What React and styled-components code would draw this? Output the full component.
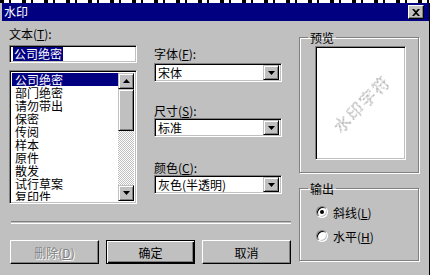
import React from 'react';
import styled, { createGlobalStyle } from 'styled-components';

const GlobalStyle = createGlobalStyle`
  html, body { margin: 0; padding: 0; }
  body {
    width: 430px;
    height: 275px;
    overflow: hidden;
    background: #c0c0c0;
    font-family: "Noto Sans CJK SC", "Liberation Sans", sans-serif;
    font-size: 12px;
    color: #000;
  }
`;

const face = '#c0c0c0';
const shadow = '#808080';
const navy = '#000080';

const TopStrip = styled.div`
  height: 3px;
  background: repeating-linear-gradient(90deg, #000 0 4px, #fff 4px 9px, #000 9px 11px, #fff 11px 22px);
`;

const Window = styled.div`
  position: relative;
  height: 272px;
  padding-left: 2px;
  background: ${face};
  box-sizing: border-box;
  border-right: 1px solid #000;
`;

const TitleBar = styled.div`
  height: 18px;
  background: ${navy};
  display: flex;
  align-items: center;
  justify-content: space-between;
  padding: 0 5px 0 2px;
  color: #fff;
  font-size: 12px;
  line-height: 18px;
`;

const CloseButton = styled.div`
  width: 16px;
  height: 14px;
  box-sizing: border-box;
  background: ${face};
  border: 1px solid;
  border-color: #fff #000 #000 #fff;
  box-shadow: inset -1px -1px 0 ${shadow};
  display: flex;
  align-items: center;
  justify-content: center;
`;

const Body = styled.div`
  display: flex;
  padding: 6px 0 0 7px;
`;

const LeftArea = styled.div`
  width: 282px;
  display: flex;
  flex-direction: column;
`;

const TopRow = styled.div`
  display: flex;
  gap: 17px;
`;

const Column = styled.div`
  width: 128px;
  display: flex;
  flex-direction: column;
  padding-top: ${p => p.$top || 0}px;
`;

const Label = styled.div`
  height: 13px;
  line-height: 13px;
  white-space: nowrap;
  margin-top: ${p => p.$mt || 0}px;
  margin-bottom: ${p => p.$mb || 0}px;
  u { text-decoration: underline; }
`;

const Sunken = styled.div`
  box-sizing: border-box;
  background: #fff;
  border: 1px solid;
  border-color: ${shadow} #fff #fff ${shadow};
  box-shadow: inset 1px 1px 0 #000, inset -1px -1px 0 ${face};
`;

const TextField = styled(Sunken)`
  height: 18px;
  padding: 1px 3px;
  display: flex;
  align-items: center;
`;

const Selected = styled.span`
  background: ${navy};
  color: #fff;
  line-height: 14px;
  padding: 0 1px;
`;

const ListBox = styled(Sunken)`
  margin-top: 7px;
  height: 134px;
  padding: 2px;
  display: flex;
`;

const ListItems = styled.div`
  flex: 1;
  overflow: hidden;
`;

const ListItem = styled.div`
  height: 13px;
  line-height: 13px;
  padding-left: 3px;
  white-space: nowrap;
  background: ${p => (p.$active ? navy : 'transparent')};
  color: ${p => (p.$active ? '#fff' : '#000')};
`;

const ScrollBar = styled.div`
  width: 16px;
  display: flex;
  flex-direction: column;
`;

const ArrowButton = styled.div`
  width: 16px;
  height: ${p => p.$h || 16}px;
  box-sizing: border-box;
  background: ${face};
  border: 1px solid;
  border-color: ${face} #000 #000 ${face};
  box-shadow: inset 1px 1px 0 #fff, inset -1px -1px 0 ${shadow};
  display: flex;
  align-items: center;
  justify-content: center;
  flex: none;
`;

const Track = styled.div`
  flex: 1;
  background: repeating-conic-gradient(${face} 0 25%, #fff 0 50%) 0 0 / 2px 2px;
`;

const Combo = styled(Sunken)`
  height: 19px;
  padding: 2px 2px 2px 3px;
  display: flex;
  align-items: center;
  justify-content: space-between;
`;

const ComboText = styled.span`
  white-space: nowrap;
`;

const Separator = styled.div`
  margin-top: 17px;
  margin-left: 2px;
  height: 1px;
  border-top: 1px solid ${shadow};
  border-bottom: 1px solid #fff;
`;

const ButtonRow = styled.div`
  display: flex;
  gap: 7px;
  margin-top: 16px;
  padding-left: 1px;
`;

const Button = styled.div`
  width: 89px;
  height: 24px;
  box-sizing: border-box;
  background: ${face};
  border: 1px solid;
  border-color: ${p => (p.$default ? '#000' : '#fff #000 #000 #fff')};
  box-shadow: ${p =>
    p.$default
      ? `inset 1px 1px 0 #fff, inset -1px -1px 0 #000, inset -2px -2px 0 ${shadow}`
      : `inset -1px -1px 0 ${shadow}`};
  display: flex;
  align-items: center;
  justify-content: center;
  color: ${p => (p.$disabled ? shadow : '#000')};
  text-shadow: ${p => (p.$disabled ? '1px 1px 0 #fff' : 'none')};
  u { text-decoration: underline; }
`;

const RightArea = styled.div`
  width: 120px;
  margin-left: 8px;
  display: flex;
  flex-direction: column;
`;

const Group = styled.fieldset`
  margin: 0;
  margin-top: ${p => p.$mt || 0}px;
  height: ${p => p.$h}px;
  box-sizing: border-box;
  border: 1px solid ${shadow};
  box-shadow: 1px 1px 0 #fff, inset 1px 1px 0 #fff;
  padding: 0;
  display: flex;
  flex-direction: column;
`;

const Legend = styled.legend`
  margin-left: 8px;
  padding: 0 2px;
  line-height: 13px;
  height: 13px;
`;

const PreviewBox = styled(Sunken)`
  margin: 2px 0 0 15px;
  width: 91px;
  height: 114px;
  display: flex;
  align-items: center;
  justify-content: center;
  overflow: hidden;
`;

const PreviewText = styled.span`
  transform: rotate(-45deg);
  font-size: 17px;
  letter-spacing: 1px;
  white-space: nowrap;
  color: transparent;
  background: repeating-conic-gradient(#a8a8a8 0 25%, #fff 0 50%) 0 0 / 2px 2px;
  -webkit-background-clip: text;
  background-clip: text;
  font-weight: 700;
`;

const RadioList = styled.div`
  display: flex;
  flex-direction: column;
  gap: 12px;
  padding: 11px 0 0 16px;
`;

const RadioRow = styled.div`
  display: flex;
  align-items: center;
  gap: 5px;
  height: 12px;
  u { text-decoration: underline; }
`;

const RadioCircle = styled.div`
  width: 12px;
  height: 12px;
  box-sizing: border-box;
  border-radius: 50%;
  background: #fff;
  border: 1px solid;
  border-color: ${shadow} #fff #fff ${shadow};
  box-shadow: inset 1px 1px 0 #000, inset -1px -1px 0 ${face};
  display: flex;
  align-items: center;
  justify-content: center;
  &::after {
    content: '';
    width: 4px;
    height: 4px;
    border-radius: 50%;
    background: ${p => (p.$checked ? '#000' : 'transparent')};
  }
`;

const DownArrow = () => (
  <svg width="7" height="4" viewBox="0 0 7 4">
    <path d="M0 0h7L3.5 4z" fill="#000" />
  </svg>
);

const UpArrow = () => (
  <svg width="7" height="4" viewBox="0 0 7 4">
    <path d="M0 4h7L3.5 0z" fill="#000" />
  </svg>
);

const CloseIcon = () => (
  <svg width="8" height="7" viewBox="0 0 8 7">
    <path d="M0 0h2l2 2 2-2h2L5 3.5 8 7H6L4 5 2 7H0l3-3.5z" fill="#000" />
  </svg>
);

const items = ['公司绝密', '部门绝密', '请勿带出', '保密', '传阅', '样本', '原件', '散发', '试行草案', '复印件'];

const ComboBox = ({ value }) => (
  <Combo>
    <ComboText>{value}</ComboText>
    <ArrowButton $h={15}>
      <DownArrow />
    </ArrowButton>
  </Combo>
);

export default function App() {
  return (
    <>
      <GlobalStyle />
      <TopStrip />
      <Window>
        <TitleBar>
          <span>水印</span>
          <CloseButton>
            <CloseIcon />
          </CloseButton>
        </TitleBar>
        <Body>
          <LeftArea>
            <TopRow>
              <Column>
                <Label $mb={5}>文本(<u>T</u>):</Label>
                <TextField>
                  <Selected>公司绝密</Selected>
                </TextField>
                <ListBox>
                  <ListItems>
                    {items.map((it, i) => (
                      <ListItem key={it} $active={i === 0}>{it}</ListItem>
                    ))}
                  </ListItems>
                  <ScrollBar>
                    <ArrowButton><UpArrow /></ArrowButton>
                    <ArrowButton $h={42} />
                    <Track />
                    <ArrowButton><DownArrow /></ArrowButton>
                  </ScrollBar>
                </ListBox>
              </Column>
              <Column $top={20}>
                <Label $mb={3}>字体(<u>F</u>):</Label>
                <ComboBox value="宋体" />
                <Label $mt={22} $mb={1}>尺寸(<u>S</u>):</Label>
                <ComboBox value="标准" />
                <Label $mt={24} $mb={1}>颜色(<u>C</u>):</Label>
                <ComboBox value="灰色(半透明)" />
              </Column>
            </TopRow>
            <Separator />
            <ButtonRow>
              <Button $disabled>删除(<u>D</u>)</Button>
              <Button $default>确定</Button>
              <Button>取消</Button>
            </ButtonRow>
          </LeftArea>
          <RightArea>
            <Group $h={142} $mt={4}>
              <Legend>预览</Legend>
              <PreviewBox>
                <PreviewText>水印字符</PreviewText>
              </PreviewBox>
            </Group>
            <Group $h={79} $mt={9}>
              <Legend>输出</Legend>
              <RadioList>
                <RadioRow>
                  <RadioCircle $checked />
                  <span>斜线(<u>L</u>)</span>
                </RadioRow>
                <RadioRow>
                  <RadioCircle />
                  <span>水平(<u>H</u>)</span>
                </RadioRow>
              </RadioList>
            </Group>
          </RightArea>
        </Body>
      </Window>
    </>
  );
}
